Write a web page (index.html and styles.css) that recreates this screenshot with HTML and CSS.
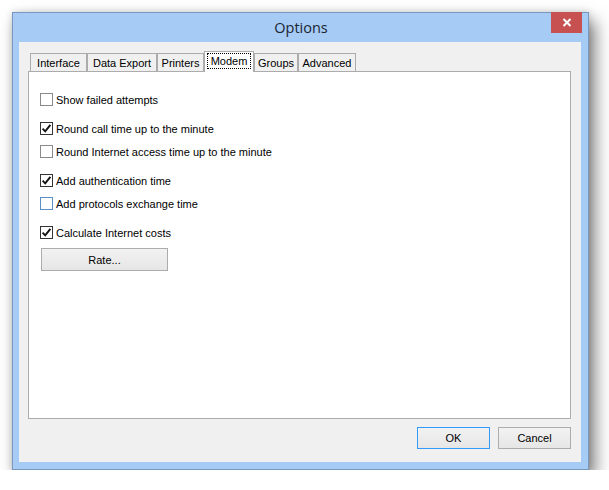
FILE: index.html
```html
<!DOCTYPE html>
<html>
<head>
<meta charset="utf-8">
<link rel="stylesheet" href="styles.css">
</head>
<body>
<div class="window">
  <div class="titlebar">
    <span class="title">Options</span>
    <div class="close">
      <svg width="10" height="9" viewBox="0 0 10 9"><path d="M1.5 1 L8.5 8 M8.5 1 L1.5 8" stroke="#fff" stroke-width="2" fill="none"/></svg>
    </div>
  </div>
  <div class="client">
    <div class="tabs">
      <div class="tab w-interface">Interface</div>
      <div class="tab w-export">Data Export</div>
      <div class="tab w-printers">Printers</div>
      <div class="tab sel w-modem"><span class="focus">Modem</span></div>
      <div class="tab w-groups">Groups</div>
      <div class="tab w-advanced">Advanced</div>
    </div>
    <div class="panel">
      <div class="group">
        <div class="row"><span class="box"></span><span class="label">Show failed attempts</span></div>
      </div>
      <div class="group">
        <div class="row"><span class="box checked"><svg width="11" height="11" viewBox="0 0 11 11"><path d="M1.6 5.6 L4.2 8.3 L9.4 1.8" stroke="#111" stroke-width="1.9" fill="none"/></svg></span><span class="label">Round call time up to the minute</span></div>
        <div class="row"><span class="box"></span><span class="label">Round Internet access time up to the minute</span></div>
      </div>
      <div class="group">
        <div class="row"><span class="box checked"><svg width="11" height="11" viewBox="0 0 11 11"><path d="M1.6 5.6 L4.2 8.3 L9.4 1.8" stroke="#111" stroke-width="1.9" fill="none"/></svg></span><span class="label">Add authentication time</span></div>
        <div class="row"><span class="box hover"></span><span class="label">Add protocols exchange time</span></div>
      </div>
      <div class="group">
        <div class="row"><span class="box checked"><svg width="11" height="11" viewBox="0 0 11 11"><path d="M1.6 5.6 L4.2 8.3 L9.4 1.8" stroke="#111" stroke-width="1.9" fill="none"/></svg></span><span class="label">Calculate Internet costs</span></div>
        <div class="btn rate">Rate...</div>
      </div>
    </div>
    <div class="buttons">
      <div class="btn dlg default">OK</div>
      <div class="btn dlg">Cancel</div>
    </div>
  </div>
</div>
</body>
</html>
```
FILE: styles.css
```css
html, body {
  margin: 0;
  padding: 0;
  background: #ffffff;
}
body {
  padding: 12px 0 0 12px;
  font-family: "Liberation Sans", Arial, sans-serif;
  font-size: 11px;
  color: #000;
}
.window {
  position: relative;
  width: 577px;
  height: 458px;
  box-sizing: border-box;
  border: 1px solid #7898c0;
  background: #a6cbf5;
  padding: 0 7px 7px 6px;
  display: flex;
  flex-direction: column;
  box-shadow: 6px 9px 16px rgba(0, 0, 0, 0.5), 0 0 7px rgba(0,0,0,0.15);
}
.titlebar {
  height: 29px;
  display: flex;
  align-items: center;
  justify-content: center;
}
.title {
  font-family: "Open Sans", "Noto Sans", sans-serif;
  font-size: 14.5px;
  color: #1a2634;
  margin-left: 2px;
  margin-top: -1px;
}
.close {
  position: absolute;
  top: -1px;
  right: 6px;
  width: 31px;
  height: 21px;
  background: #c75050;
  display: flex;
  align-items: center;
  justify-content: center;
}
.client {
  flex: 1;
  background: #f0f0f0;
  box-sizing: border-box;
  padding: 10px 10px 0 9px;
  display: flex;
  flex-direction: column;
}
.tabs {
  display: flex;
  align-items: flex-end;
  height: 19px;
  padding-left: 2px;
  position: relative;
  z-index: 1;
}
.tab {
  box-sizing: border-box;
  height: 18px;
  border: 1px solid #acacac;
  border-bottom: none;
  background: #f0f0f0;
  display: flex;
  align-items: center;
  justify-content: center;
  padding-top: 1px;
}
.tab.sel {
  height: 21px;
  background: #ffffff;
  margin-bottom: -1px;
  padding-top: 0;
  padding-bottom: 2px;
}
.focus {
  outline: 1px dotted #000;
  outline-offset: 1px;
  padding: 0 2px;
}
.w-interface { width: 57px; }
.w-export { width: 70px; }
.w-printers { width: 47px; }
.w-modem { width: 50px; }
.w-groups { width: 44px; }
.w-advanced { width: 58px; }
.panel {
  height: 348px;
  box-sizing: border-box;
  border: 1px solid #acacac;
  background: #ffffff;
  padding: 21px 0 0 11px;
  display: flex;
  flex-direction: column;
  gap: 16px;
}
.group {
  display: flex;
  flex-direction: column;
  gap: 10px;
}
.row {
  display: flex;
  align-items: center;
  height: 13px;
}
.box {
  width: 13px;
  height: 13px;
  box-sizing: border-box;
  border: 1px solid #8a8a8a;
  background: #fff;
  display: flex;
  align-items: center;
  justify-content: center;
  flex: none;
}
.box.checked {
  border-color: #333333;
}
.box.hover {
  border-color: #5a8ec6;
}
.label {
  margin-left: 3px;
  white-space: nowrap;
}
.btn {
  box-sizing: border-box;
  border: 1px solid #acacac;
  background: linear-gradient(#f2f2f2, #e6e6e6);
  display: flex;
  align-items: center;
  justify-content: center;
}
.rate {
  width: 127px;
  height: 23px;
  margin-left: 1px;
  margin-top: -1px;
}
.buttons {
  display: flex;
  justify-content: flex-end;
  gap: 8px;
  margin-top: 8px;
}
.dlg {
  width: 73px;
  height: 22px;
}
.dlg.default {
  border-color: #3399ff;
}
```
